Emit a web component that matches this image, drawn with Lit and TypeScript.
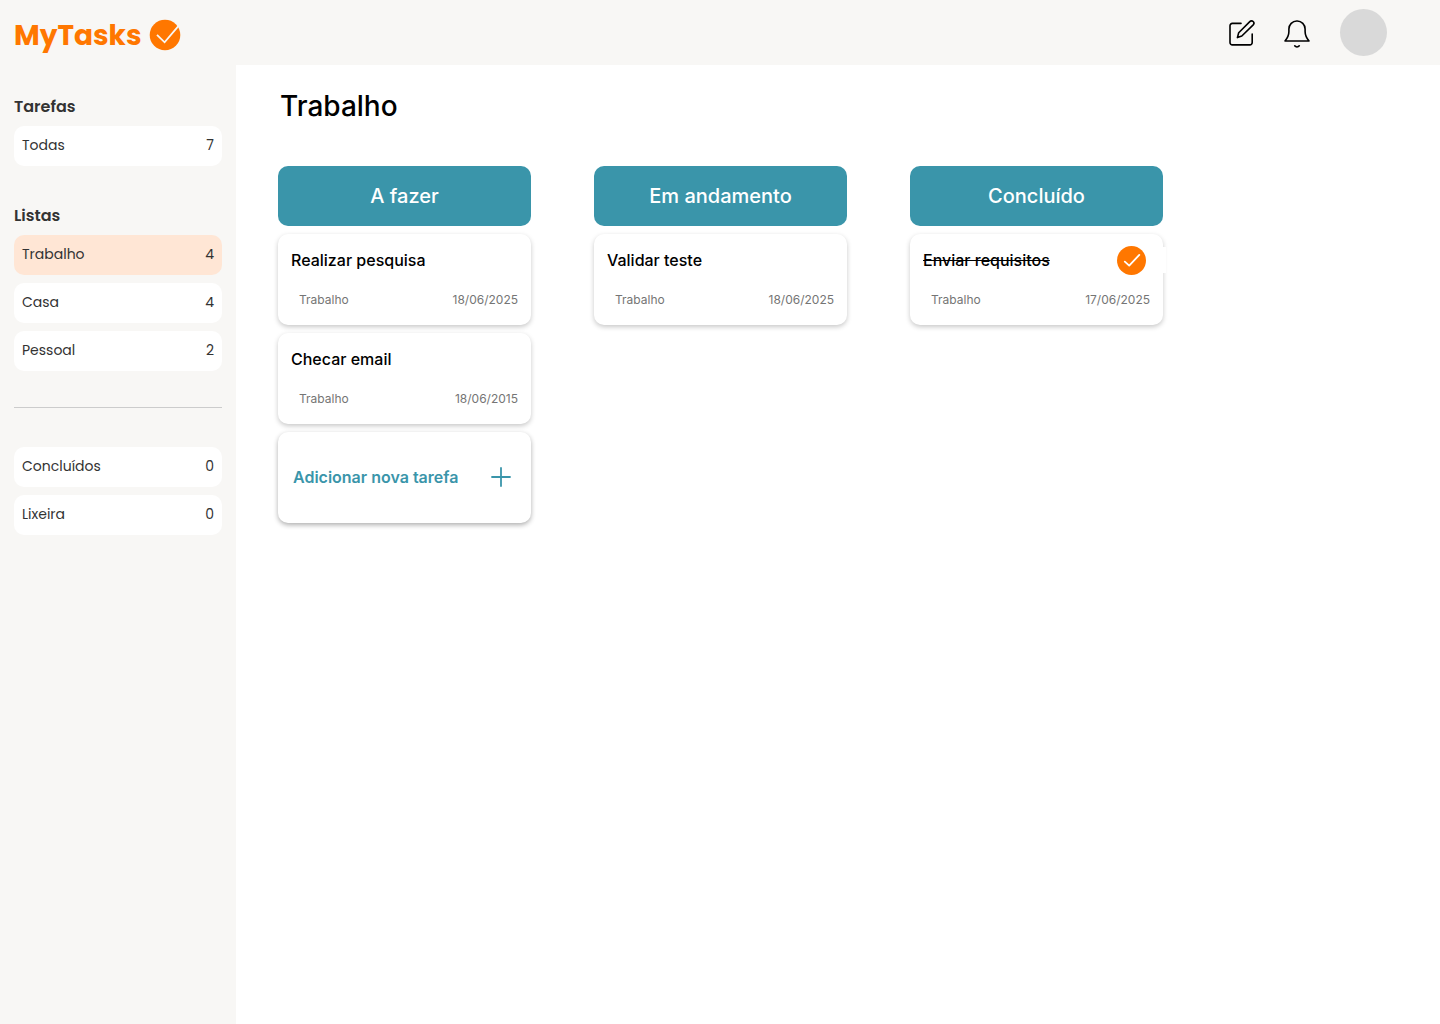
import { LitElement, html, css, svg, nothing } from "lit";
import { customElement, property, state } from "lit/decorators.js";

interface Task {
  title: string;
  list: string;
  date: string;
  done?: boolean;
}

interface Column {
  name: string;
  tasks: Task[];
  canAdd?: boolean;
}

interface Entry {
  name: string;
  count: number;
}

const COLUMNS: Column[] = [
  {
    name: "A fazer",
    canAdd: true,
    tasks: [
      { title: "Realizar pesquisa", list: "Trabalho", date: "18/06/2025" },
      { title: "Checar email", list: "Trabalho", date: "18/06/2015" },
    ],
  },
  {
    name: "Em andamento",
    tasks: [{ title: "Validar teste", list: "Trabalho", date: "18/06/2025" }],
  },
  {
    name: "Concluído",
    tasks: [{ title: "Enviar requisitos", list: "Trabalho", date: "17/06/2025", done: true }],
  },
];

const TASK_ENTRIES: Entry[] = [{ name: "Todas", count: 7 }];
const LIST_ENTRIES: Entry[] = [
  { name: "Trabalho", count: 4 },
  { name: "Casa", count: 4 },
  { name: "Pessoal", count: 2 },
];
const ARCHIVE_ENTRIES: Entry[] = [
  { name: "Concluídos", count: 0 },
  { name: "Lixeira", count: 0 },
];

const editIcon = html`<svg width="28" height="28" viewBox="0 0 28 28" fill="none" stroke="#000"
  stroke-width="1.6" stroke-linecap="round" stroke-linejoin="round" aria-hidden="true">
  ${svg`<path d="M13 4.4H4.3A2.3 2.3 0 0 0 2 6.7V23.6A2.3 2.3 0 0 0 4.3 25.9H21.9A2.3 2.3 0 0 0 24.2 23.6V15" />
  <path d="M21.8 2.6a2.35 2.35 0 0 1 3.4 3.3L13.8 17l-4.4 1.6 1.3-4.8z" />`}
</svg>`;

const bellIcon = html`<svg width="28" height="30" viewBox="0 0 28 30" fill="none" stroke="#000"
  stroke-width="1.6" stroke-linecap="round" stroke-linejoin="round" aria-hidden="true">
  ${svg`<path d="M1 23C3.4 20 4.9 17.4 4.9 13.4V11A8 8 0 0 1 12.8 3H13.2A8 8 0 0 1 21.1 11V13.4C21.1 17.4 22.6 20 25 23Z" />
  <path d="M10.7 27.8C11.8 29.3 14.2 29.3 15.3 27.8" />`}
</svg>`;

@customElement("task-card")
export class TaskCard extends LitElement {
  @property({ attribute: false }) task!: Task;

  static styles = css`
    :host {
      display: block;
    }
    .card {
      box-sizing: border-box;
      padding: 14px 13px 17px;
      border-radius: 10px;
      background: #fff;
      box-shadow: 0 2px 5px rgba(0, 0, 0, 0.22);
    }
    .top {
      display: flex;
      align-items: center;
      justify-content: space-between;
      height: 24px;
    }
    .title {
      margin: 0;
      font-size: 16px;
      line-height: 24px;
      font-weight: 500;
      color: #000;
    }
    .done {
      text-decoration: line-through;
    }
    .check {
      display: flex;
      align-items: center;
      height: 26px;
      margin-right: -16px;
      padding-right: 20px;
      background: #fff;
    }
    .mark {
      display: grid;
      place-items: center;
      cursor: pointer;
    }
    .box,
    .tick {
      grid-area: 1 / 1;
    }
    .box {
      appearance: none;
      width: 29px;
      height: 29px;
      margin: 0;
      border-radius: 50%;
      background: #ff7700;
    }
    .tick {
      pointer-events: none;
    }
    .meta {
      display: flex;
      justify-content: space-between;
      margin-top: 20px;
      padding-left: 8px;
      font-size: 12px;
      line-height: 16px;
      color: #757575;
    }
  `;

  render() {
    const { title, list, date, done } = this.task;
    return html`<article class="card">
      <div class="top">
        <h3 class="title ${done ? "done" : ""}">${title}</h3>
        ${done
          ? html`<div class="check">
              <label class="mark">
                <input class="box" type="checkbox" checked aria-label=${title} />
                <svg class="tick" width="29" height="29" viewBox="0 0 29 29" fill="none" aria-hidden="true">
                  <path d="M7.8 15.6 12.2 19.6 22.3 8.9" stroke="#fff" stroke-width="1.8"
                    stroke-linecap="round" stroke-linejoin="round" />
                </svg>
              </label>
            </div>`
          : nothing}
      </div>
      <div class="meta"><span>${list}</span><time>${date}</time></div>
    </article>`;
  }
}

@customElement("app-root")
export class AppRoot extends LitElement {
  @state() private current = "Trabalho";

  static styles = css`
    :host {
      display: flex;
      flex-direction: column;
      min-height: 100vh;
      background: #fff;
      font-family: Inter, "Liberation Sans", sans-serif;
    }
    .header {
      display: flex;
      align-items: center;
      justify-content: space-between;
      box-sizing: border-box;
      height: 65px;
      padding: 0 53px 0 14px;
      background: #f8f7f5;
    }
    .logo {
      display: flex;
      align-items: center;
      gap: 7px;
      padding-top: 5px;
      color: #ff7700;
      font-family: Poppins, Inter, sans-serif;
      font-size: 28px;
      line-height: 34px;
      font-weight: 700;
      text-decoration: none;
    }
    .logo-text {
      padding-top: 2px;
    }
    .actions {
      display: flex;
      align-items: center;
      gap: 28px;
    }
    .icon,
    .avatar {
      display: block;
      padding: 0;
      border: 0;
      background: none;
      cursor: pointer;
    }
    .icon svg {
      display: block;
    }
    .avatar {
      width: 47px;
      height: 47px;
      border-radius: 50%;
      background: #d9d9d9;
    }
    .body {
      display: flex;
      flex: 1;
    }
    .sidebar {
      flex: 0 0 236px;
      box-sizing: border-box;
      padding: 30px 14px;
      background: #f8f7f5;
      color: #333;
      font-family: Poppins, Inter, sans-serif;
    }
    .heading {
      margin: 0 0 7px;
      font-size: 16px;
      line-height: 24px;
      font-weight: 600;
    }
    .group + .group {
      margin-top: 38px;
    }
    .entries {
      display: flex;
      flex-direction: column;
      gap: 8px;
      margin: 0;
      padding: 0;
      list-style: none;
    }
    .entry {
      display: flex;
      align-items: center;
      justify-content: space-between;
      width: 100%;
      height: 40px;
      padding: 0 8px 1px;
      border: 0;
      border-radius: 10px;
      background: #fff;
      color: inherit;
      font: inherit;
      font-size: 14px;
      cursor: pointer;
    }
    .selected {
      background: #ffe6d5;
    }
    .divider {
      height: 1px;
      margin: 36px 0 39px;
      border: 0;
      background: #ccc;
    }
    .main {
      flex: 1;
      min-width: 0;
      padding: 24px 42px;
    }
    .page-title {
      margin: 0 0 43px;
      padding-left: 2px;
      color: #000;
      font-size: 28px;
      line-height: 34px;
      font-weight: 500;
    }
    .board {
      display: grid;
      grid-template-columns: repeat(3, minmax(200px, 253px));
      align-items: start;
      gap: 63px;
    }
    .column {
      display: flex;
      flex-direction: column;
      gap: 8px;
    }
    .column-title {
      margin: 0;
      border-radius: 10px;
      background: #3a95aa;
      color: #fff;
      font-size: 20px;
      line-height: 60px;
      font-weight: 500;
      text-align: center;
    }
    .add {
      display: flex;
      align-items: center;
      justify-content: space-between;
      height: 91px;
      padding: 0 20px 1px 15px;
      border: 0;
      border-radius: 10px;
      background: #fff;
      box-shadow: 0 2px 5px rgba(0, 0, 0, 0.32);
      color: #3a95aa;
      font: inherit;
      font-size: 16px;
      font-weight: 600;
      cursor: pointer;
    }
  `;

  private renderEntries(entries: Entry[]) {
    return html`<ul class="entries">
      ${entries.map(
        (entry) => html`<li>
          <button
            class="entry ${entry.name === this.current ? "selected" : ""}"
            @click=${() => (this.current = entry.name)}
          >
            <span>${entry.name}</span><span>${entry.count}</span>
          </button>
        </li>`,
      )}
    </ul>`;
  }

  render() {
    return html`
      <header class="header">
        <a class="logo" href="#">
          <span class="logo-text">MyTasks</span>
          <svg width="32" height="32" viewBox="0 0 32 32" fill="none" aria-hidden="true">
            <circle cx="16" cy="16" r="15.3" fill="#ff7700" />
            <path d="M8 15.8 15.6 23.3 30.4 5.8" stroke="#f8f7f5" stroke-width="1.8" />
          </svg>
        </a>
        <div class="actions">
          <button class="icon" aria-label="Editar">${editIcon}</button>
          <button class="icon" aria-label="Notificações">${bellIcon}</button>
          <button class="avatar" aria-label="Perfil"></button>
        </div>
      </header>
      <div class="body">
        <nav class="sidebar">
          <section class="group">
            <h2 class="heading">Tarefas</h2>
            ${this.renderEntries(TASK_ENTRIES)}
          </section>
          <section class="group">
            <h2 class="heading">Listas</h2>
            ${this.renderEntries(LIST_ENTRIES)}
          </section>
          <hr class="divider" />
          ${this.renderEntries(ARCHIVE_ENTRIES)}
        </nav>
        <main class="main">
          <h1 class="page-title">${this.current}</h1>
          <div class="board">
            ${COLUMNS.map(
              (column) => html`<section class="column">
                <h2 class="column-title">${column.name}</h2>
                ${column.tasks.map((task) => html`<task-card .task=${task}></task-card>`)}
                ${column.canAdd
                  ? html`<button class="add">
                      <span>Adicionar nova tarefa</span>
                      <svg width="20" height="20" viewBox="0 0 20 20" stroke="#3a95aa" stroke-width="1.8"
                        stroke-linecap="round" aria-hidden="true">
                        <path d="M10 1V19M1 10H19" />
                      </svg>
                    </button>`
                  : nothing}
              </section>`,
            )}
          </div>
        </main>
      </div>
    `;
  }
}
